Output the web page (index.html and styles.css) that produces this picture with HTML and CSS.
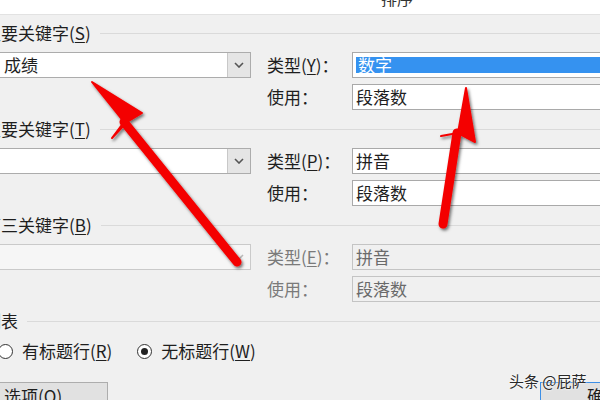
FILE: index.html
```html
<!DOCTYPE html>
<html lang="zh-CN">
<head>
<meta charset="utf-8">
<title>排序</title>
<link rel="stylesheet" href="styles.css">
</head>
<body>
<div class="title-bar"><span class="title">排序</span></div>
<div class="dialog">
  <section class="group">
    <div class="group-head"><span class="group-label">主要关键字(<u>S</u>)</span><i class="rule"></i></div>
    <div class="group-body">
      <div class="combo"><span class="combo-value">成绩</span><span class="combo-btn"><svg width="10" height="6" viewBox="0 0 10 6"><path d="M1 1 L5 5 L9 1" fill="none" stroke="#555" stroke-width="1.6"/></svg></span></div>
      <div class="fields">
        <div class="field"><span class="label">类型(<u>Y</u>)：</span><div class="input"><span class="sel">数字</span></div></div>
        <div class="field"><span class="label">使用：</span><div class="input">段落数</div></div>
      </div>
    </div>
  </section>
  <section class="group">
    <div class="group-head"><span class="group-label">次要关键字(<u>T</u>)</span><i class="rule"></i></div>
    <div class="group-body">
      <div class="combo"><span class="combo-value"></span><span class="combo-btn"><svg width="10" height="6" viewBox="0 0 10 6"><path d="M1 1 L5 5 L9 1" fill="none" stroke="#555" stroke-width="1.6"/></svg></span></div>
      <div class="fields">
        <div class="field"><span class="label">类型(<u>P</u>)：</span><div class="input">拼音</div></div>
        <div class="field"><span class="label">使用：</span><div class="input">段落数</div></div>
      </div>
    </div>
  </section>
  <section class="group">
    <div class="group-head"><span class="group-label">第三关键字(<u>B</u>)</span><i class="rule"></i></div>
    <div class="group-body disabled">
      <div class="combo"><span class="combo-value"></span><span class="combo-btn"><svg width="10" height="6" viewBox="0 0 10 6"><path d="M1 1 L5 5 L9 1" fill="none" stroke="#bbb" stroke-width="1.6"/></svg></span></div>
      <div class="fields">
        <div class="field"><span class="label">类型(<u>E</u>)：</span><div class="input">拼音</div></div>
        <div class="field"><span class="label">使用：</span><div class="input">段落数</div></div>
      </div>
    </div>
  </section>
  <section class="group list">
    <div class="group-head"><span class="group-label">列表</span><i class="rule"></i></div>
    <div class="radios">
      <span class="radio"><i class="dot"></i><span class="radio-text">有标题行(<u>R</u>)</span></span>
      <span class="radio checked"><i class="dot"></i><span class="radio-text">无标题行(<u>W</u>)</span></span>
    </div>
  </section>
  <div class="buttons">
    <span class="btn options">选项(<u>O</u>)...</span>
    <span class="btn primary">确定</span>
  </div>
</div>
<div class="watermark">头条 @屁萨</div>
<svg class="arrows" width="600" height="400" viewBox="0 0 600 400">
  <defs>
    <filter id="sh" x="-20%" y="-20%" width="140%" height="140%">
      <feDropShadow dx="1.5" dy="2" stdDeviation="1.8" flood-color="#000" flood-opacity="0.55"/>
    </filter>
  </defs>
  <g filter="url(#sh)" fill="#f40000" stroke="#f40000">
    <line x1="124" y1="122" x2="237" y2="262" stroke-width="9" stroke-linecap="round"/>
    <polygon points="92,82 142,113 127,122 112,138 124,122" stroke-width="2" stroke-linejoin="round"/>
    <line x1="457" y1="133" x2="443" y2="224" stroke-width="9" stroke-linecap="round"/>
    <polygon points="466,88 475,142 458,133 441,136 458,133" stroke-width="2" stroke-linejoin="round"/>
  </g>
</svg>
</body>
</html>
```
FILE: styles.css
```css
html, body {
  margin: 0;
  padding: 0;
}
body {
  width: 600px;
  height: 400px;
  overflow: hidden;
  position: relative;
  background: #f0f0f0;
  font-family: "Noto Sans CJK SC", "Noto Sans", sans-serif;
  font-size: 17px;
  color: #1e1e1e;
}
u { text-decoration: underline; text-underline-offset: 2px; }

.title-bar {
  height: 14px;
  background: #fff;
  border-bottom: 1px solid #e2e2e2;
  overflow: hidden;
  padding-left: 381px;
}
.title {
  display: block;
  font-size: 16px;
  line-height: 20px;
  margin-top: -12px;
  color: #333;
}

.dialog {
  margin-left: -16px;
  width: 700px;
  padding-top: 8px;
}

.group { margin-bottom: 9px; }

.group-head {
  display: flex;
  align-items: center;
  height: 20px;
  margin-bottom: 9px;
}
.group-label {
  line-height: 20px;
  white-space: nowrap;
}
.rule {
  flex: 1;
  height: 1px;
  background: #dadada;
  margin-left: 9px;
}

.group-body {
  display: flex;
  align-items: flex-start;
}

.combo {
  margin-left: 14px;
  width: 251px;
  height: 24px;
  border: 1px solid #acacac;
  background: #fff;
  display: flex;
  align-items: center;
}
.combo-value {
  flex: 1;
  padding-left: 5px;
  line-height: 24px;
}
.combo-btn {
  width: 22px;
  height: 24px;
  background: #e5e5e5;
  border-left: 1px solid #c8c8c8;
  display: flex;
  align-items: center;
  justify-content: center;
}

.fields {
  margin-left: 16px;
  flex: 1;
  display: flex;
  flex-direction: column;
  gap: 6px;
}
.field {
  display: flex;
  align-items: center;
  height: 26px;
}
.label {
  width: 85px;
  line-height: 26px;
  white-space: nowrap;
}
.input {
  flex: 1;
  height: 24px;
  border: 1px solid #a9a9a9;
  background: #fff;
  line-height: 24px;
  padding-left: 3px;
  white-space: nowrap;
}
.sel {
  display: block;
  margin: 4px 0 0 0;
  height: 16px;
  line-height: 16px;
  background: #3592f0;
  color: #fff;
  padding-left: 2px;
}

.disabled .combo {
  background: #f6f6f6;
  border-color: #cacaca;
}
.disabled .combo-btn {
  background: #f6f6f6;
  border-left: none;
}
.disabled .label { color: #7a7a7a; }
.disabled .input {
  background: #f0f0f0;
  border-color: #c4c4c4;
  color: #6a6a6a;
}

.list .group-head { margin-bottom: 10px; }
.radios {
  display: flex;
  align-items: center;
  height: 20px;
  padding-left: 14px;
  gap: 25px;
}
.radio {
  display: flex;
  align-items: center;
  gap: 9px;
  white-space: nowrap;
}
.radio-text { line-height: 20px; }
.dot {
  width: 13px;
  height: 13px;
  border: 1px solid #333;
  border-radius: 50%;
  background: #fff;
  display: flex;
  align-items: center;
  justify-content: center;
}
.checked .dot::after {
  content: "";
  width: 7px;
  height: 7px;
  border-radius: 50%;
  background: #222;
}

.buttons {
  display: flex;
  margin-top: 21px;
  padding-left: 14px;
}
.btn {
  height: 28px;
  line-height: 26px;
  background: #e1e1e1;
  border: 1px solid #adadad;
  box-sizing: border-box;
  white-space: nowrap;
}
.options {
  width: 110px;
  padding-left: 5px;
}
.primary {
  margin-left: 432px;
  width: 128px;
  text-align: center;
  border-color: #3d8fe6;
}

.watermark {
  position: absolute;
  left: 509px;
  top: 370px;
  font-size: 15px;
  line-height: 22px;
  color: #2a2a2a;
  text-shadow: 0 0 2px #fff, 0 0 2px #fff;
}

.arrows {
  position: absolute;
  left: 0;
  top: 0;
  pointer-events: none;
}
```
